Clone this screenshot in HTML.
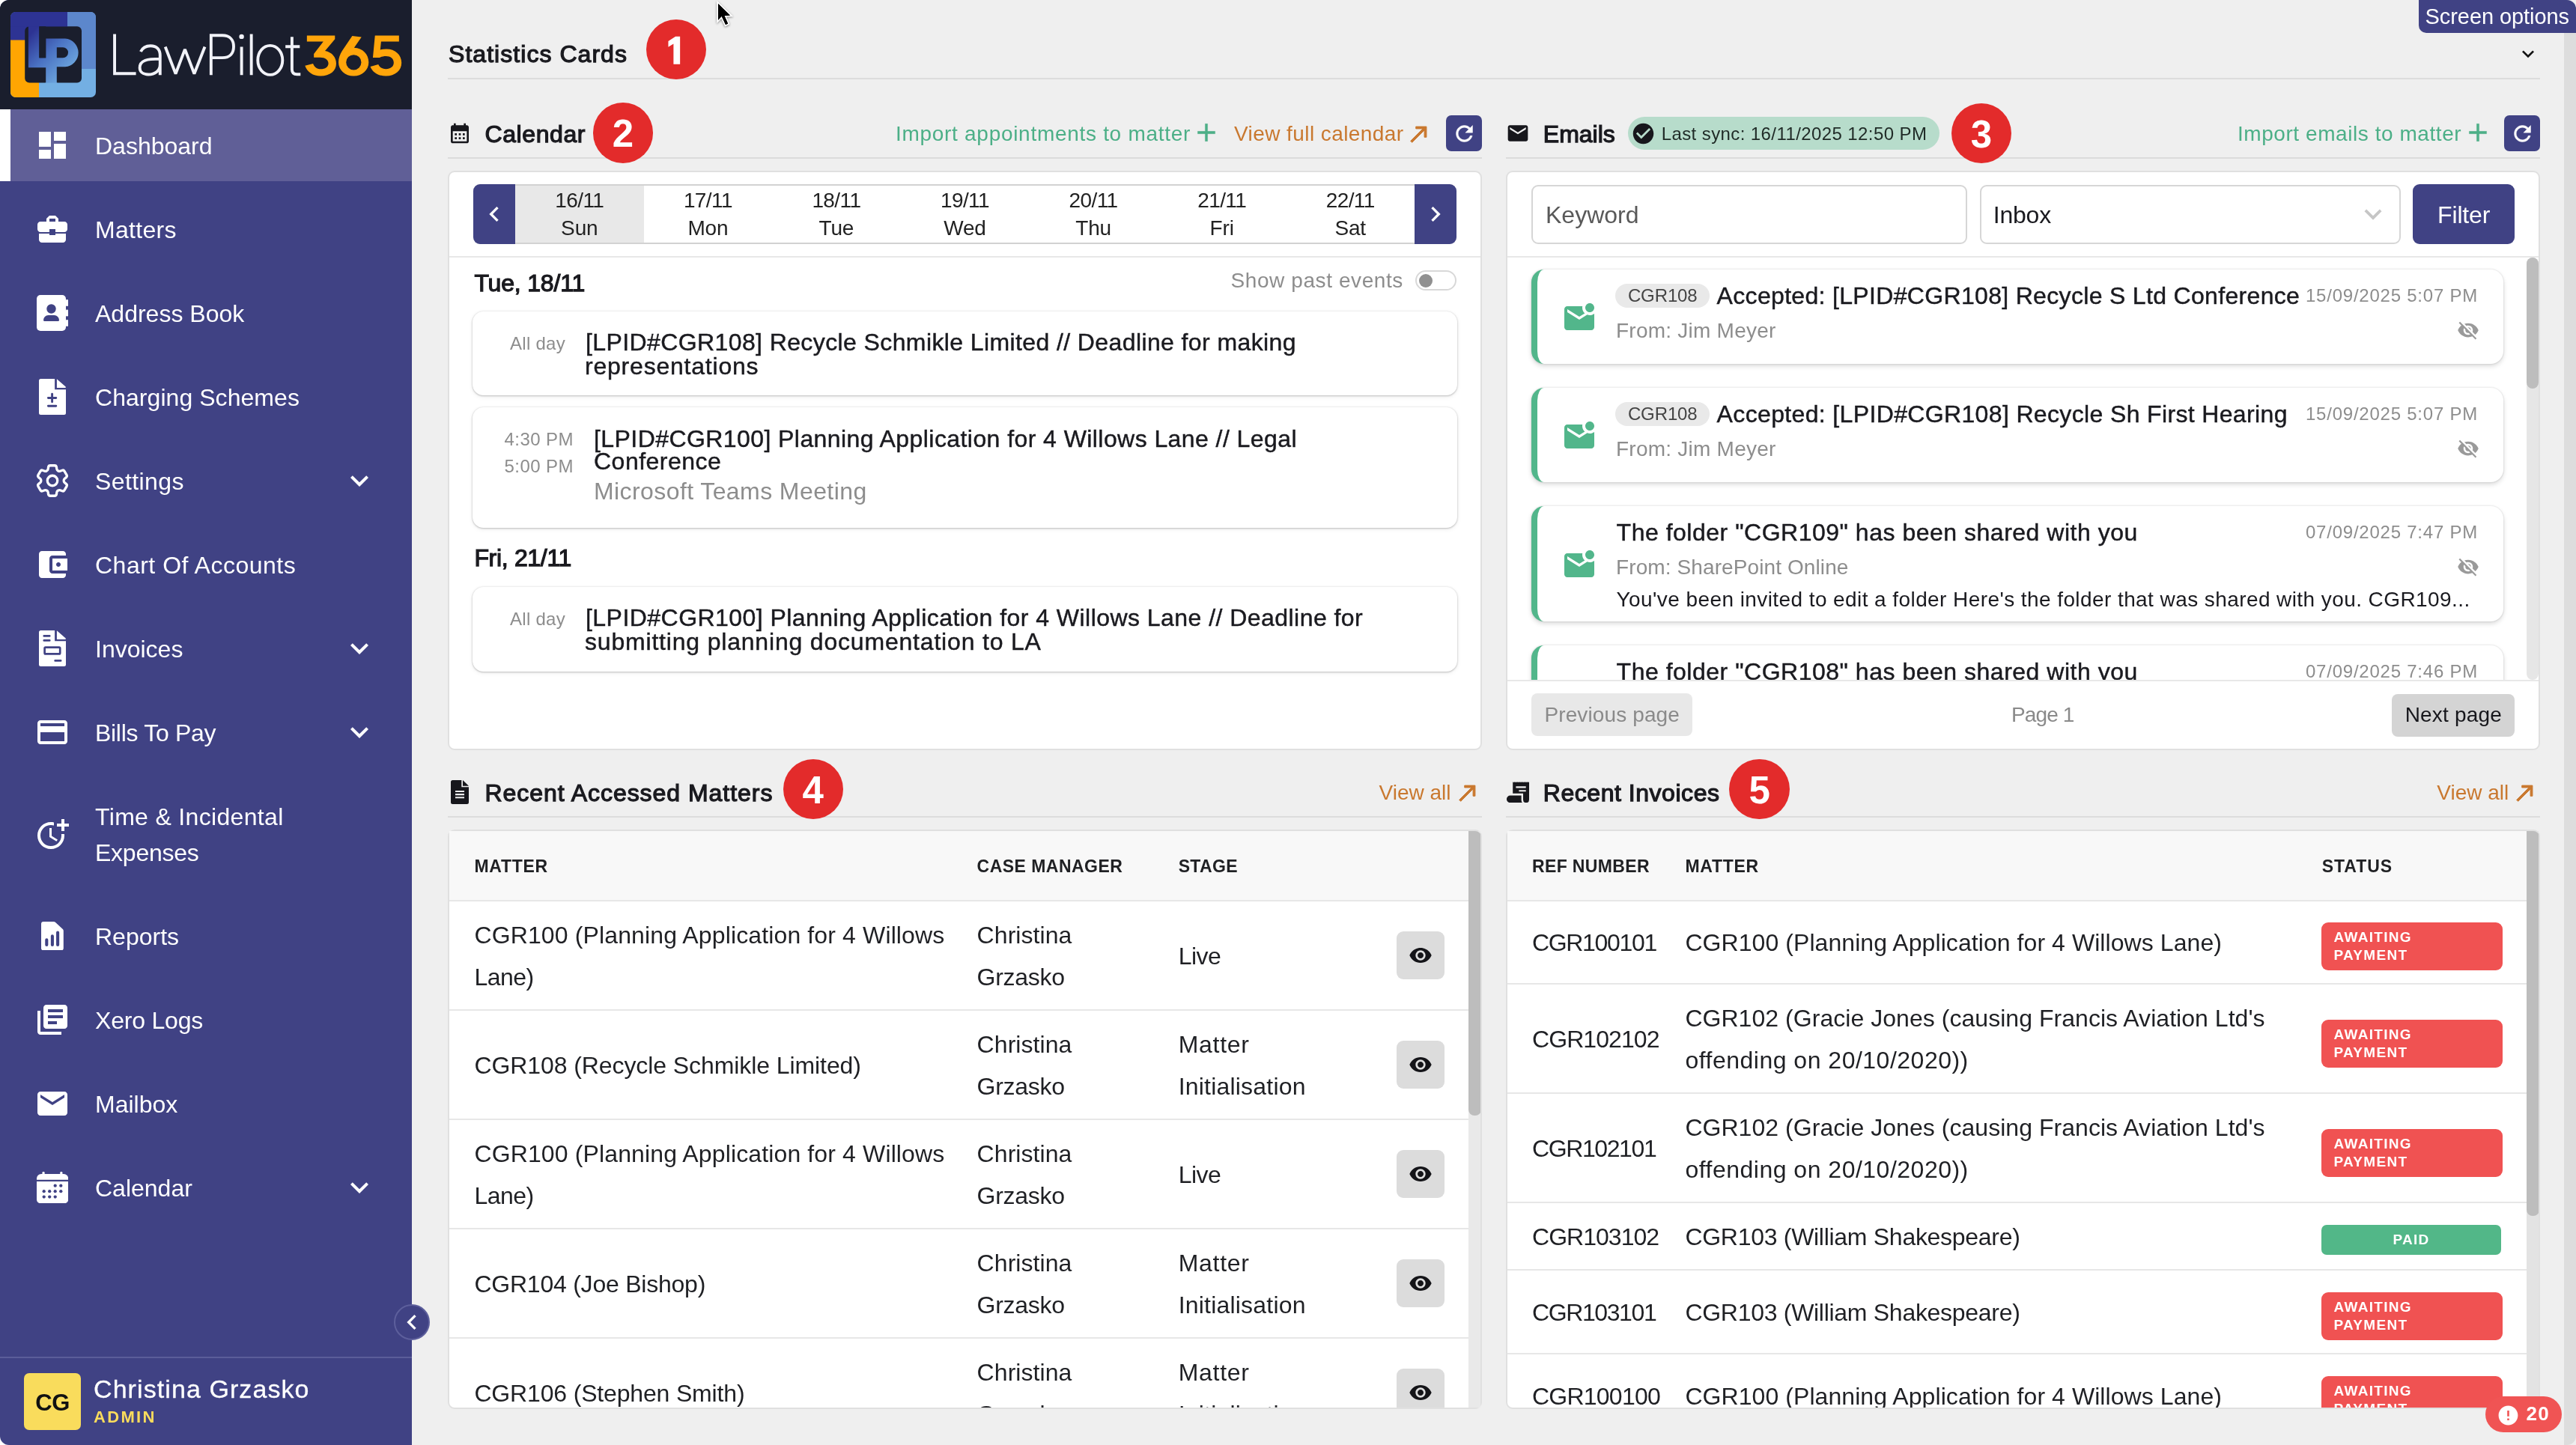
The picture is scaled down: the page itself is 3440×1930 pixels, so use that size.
<!DOCTYPE html><html><head><meta charset="utf-8"><title>LawPilot365</title><style>
html,body{margin:0;padding:0}
body{width:3440px;height:1930px;overflow:hidden;background:#efefef;font-family:"Liberation Sans",sans-serif;font-size:32px;color:#17171c;position:relative}
*{box-sizing:border-box}
#root{position:absolute;left:0;top:0;width:3440px;height:1930px;overflow:hidden;will-change:transform;transform:translateZ(0)}
.abs{position:absolute}
svg.mi{display:block}
#sb{position:absolute;left:0;top:0;width:550px;height:1930px;background:#404284;border-radius:12px 0 0 12px;overflow:hidden}
#lh{position:absolute;left:0;top:0;width:550px;height:146px;background:#1a1e2d}
.nav{position:absolute;left:0;width:550px;color:#fff}
.nav.act{background:#605f97;border-left:14px solid #fff}
.nav .ni{position:absolute;left:46px;top:50%;width:48px;height:48px;margin-top:-24px;display:flex;align-items:center;justify-content:center;overflow:visible}
.nav.act .ni{left:32px}
.nav .nl{position:absolute;left:127px;top:50%;margin-top:1px;transform:translateY(-50%);font-size:32px;line-height:48px;white-space:nowrap;letter-spacing:-0.050px}
.nav.act .nl{left:113px}
.nav .chev{position:absolute;left:456px;top:50%;margin-top:-24px}
.h2{position:absolute;font-weight:bold;font-size:32px;line-height:40px;white-space:nowrap;color:#17171c}
.hr{position:absolute;height:2px;background:#dcdcdc}
.card{position:absolute;background:#fff;border:2px solid #e0e0e0;border-radius:9px;overflow:hidden}
.num{position:absolute;z-index:5;width:80.500px;height:80.500px;border-radius:50%;background:#e32b2b;color:#fff;font-size:51px;font-weight:bold;line-height:83px;text-align:center}
.lnk{position:absolute;font-size:28px;line-height:40px;white-space:nowrap;display:flex;align-items:center}
.green{color:#4caf87}.orange{color:#c9782f}
.rbtn{position:absolute;width:48px;height:48px;border-radius:7px;background:#404284;display:flex;align-items:center;justify-content:center}
</style></head><body><div id="root">
<div class="abs" style="left:0;top:0;width:20px;height:20px;background:#fff"></div><div class="abs" style="left:0;top:1910px;width:20px;height:20px;background:#fff"></div>
<div id="sb"><div id="lh"><svg style="position:absolute;left:14px;top:16px" width="114" height="114" viewBox="0 0 114 114">
<defs><clipPath id="lc"><rect x="0" y="0" width="114" height="114" rx="7"/></clipPath>
<linearGradient id="lg" x1="0.200" y1="0" x2="0.800" y2="1"><stop offset="0.120" stop-color="#2d3393"/><stop offset="0.450" stop-color="#4a72c3"/><stop offset="0.820" stop-color="#70abe0"/><stop offset="1" stop-color="#73afe3"/></linearGradient></defs>
<g clip-path="url(#lc)">
<rect x="0" y="0" width="114" height="114" fill="#73afe3"/>
<rect x="0" y="0" width="76" height="38" fill="#2d3393"/>
<rect x="76" y="0" width="38" height="76" fill="#5c87cc"/>
<rect x="0" y="37.500" width="38" height="77" fill="#ffa502"/>
<rect x="19.200" y="19.300" width="75.800" height="75.300" rx="6" fill="#1a1e2d"/>
<path fill="url(#lg)" d="M23.900 0H38.400V61.300H47.200V35.400H73a19 19 0 0 1 0 37.900H61.800V114H47.200V74.300H23.900zM61.800 47.300V61.300H70a7 7 0 0 0 0-14z"/>
<rect x="0" y="0" width="76" height="19.300" fill="#2d3393"/>
<rect x="38.400" y="19.300" width="8.800" height="42" fill="#1a1e2d"/>
<rect x="46.500" y="94.600" width="16" height="20" fill="#73afe3"/>
</g></svg><svg style="position:absolute;left:0;top:0" width="550" height="146" viewBox="0 0 550 146">
<g fill="none" stroke="#f1f2f8" stroke-width="3.900" stroke-linejoin="miter" stroke-miterlimit="2">
<path d="M153.04,45.49 L153.04,98.31 L181.57,98.31 M187.93,68.97 C190.54,63.42 195.43,61.22 200.98,61.22 C209.29,61.22 213.78,65.87 213.78,74.02 L213.78,100.27 M213.78,78.67 C205.22,78.67 198.69,78.91 193.80,80.71 C188.91,82.58 186.63,86.25 186.63,90.49 C186.63,96.03 191.36,99.45 198.04,99.45 C206.85,99.45 213.78,94.40 213.78,86.25 M220.70,62.44 L234.56,98.48 L246.95,65.87 L259.43,98.48 L273.53,62.44 M281.84,100.27 L281.84,47.28 L296.93,47.28 C307.12,47.28 312.01,53.64 312.01,62.20 C312.01,70.76 307.12,77.12 296.93,77.12 L281.84,77.12 M322.60,62.44 L322.60,100.27 M335.65,45.49 L335.65,100.27"/><ellipse cx="360.79" cy="80.38" rx="16.500" ry="19.500"/><path d="M389.89,49.16 L389.89,92.77 C389.89,97.66 392.58,99.29 396.66,99.29 L401.30,99.29 M381.17,62.20 L400.32,62.20"/></g>
<circle cx="322.60" cy="48.91" r="3.200" fill="#f1f2f8"/>
<g fill="#ffa50a" transform="translate(400,36) scale(0.056287)">
<path d="M175,205 H840 V290 L605,570 C770,600 870,720 870,870 C870,1040 720,1165 500,1165 C320,1165 180,1070 130,920 L320,870 C350,950 410,1000 500,1000 C610,1000 685,945 685,865 C685,780 610,722 490,722 H340 V640 L565,345 H175 Z"/>
<path fill-rule="evenodd" d="M1250,215 L1470,240 L1295,492 C1500,500 1640,650 1640,840 C1640,1025 1485,1165 1283,1165 C1080,1165 925,1025 925,840 C925,740 960,650 1010,570 Z M1285,660 A180,180 0 1 0 1285,1020 A180,180 0 1 0 1285,660 Z"/>
<path d="M1790,205 H2360 V345 H1935 L1915,540 C1960,530 2010,525 2060,525 C2270,525 2420,660 2420,850 C2420,1035 2270,1165 2050,1165 C1870,1165 1730,1075 1680,940 L1870,888 C1900,960 1965,1000 2050,1000 C2160,1000 2235,940 2235,850 C2235,755 2160,695 2050,695 C1990,695 1940,708 1900,730 L1740,730 Z"/>
</g></svg></div>
<div class="nav act" style="top:146px;height:96px"><div class="ni"><svg class="mi" width="48" height="48" viewBox="0 0 24 24" style=""><path fill="#fff" d="M3 13h8V3H3v10zm0 8h8v-6H3v6zm10 0h8V11h-8v10zm0-18v6h8V3h-8z"/></svg></div><div class="nl"><span style="letter-spacing:0px">Dashboard</span></div></div>
<div class="nav" style="top:258px;height:96px"><div class="ni"><svg class="mi" width="48" height="48" viewBox="0 0 24 24" style=""><path fill="#fff" d="M10 16v-1H3.01L3 19c0 1.11.89 2 2 2h14c1.11 0 2-.89 2-2v-4h-7v1h-4zm10-9h-4.01V5l-2-2h-4l-2 2v2H4c-1.1 0-2 .9-2 2v3c0 1.11.89 2 2 2h6v-2h4v2h6c1.1 0 2-.9 2-2V9c0-1.1-.9-2-2-2zm-6 0h-4V5h4v2z"/></svg></div><div class="nl"><span style="letter-spacing:0.3px">Matters</span></div></div>
<div class="nav" style="top:370px;height:96px"><div class="ni"><svg class="mi" width="42" height="48" viewBox="0 0 42 48"><path fill="#fff" d="M5 0h29a5 5 0 0 1 5 5v38a5 5 0 0 1-5 5H5a5 5 0 0 1-5-5V5a5 5 0 0 1 5-5z"/><rect x="39" y="6" width="3" height="9" rx="1.2" fill="#fff"/><rect x="39" y="19.500" width="3" height="9" rx="1.2" fill="#fff"/><rect x="39" y="33" width="3" height="9" rx="1.2" fill="#fff"/><circle cx="19.500" cy="18.500" r="6.200" fill="#404284"/><path fill="#404284" d="M9 33.500a6.500 6.500 0 0 1 6.500-6.500h8a6.500 6.500 0 0 1 6.500 6.500v0a1.500 1.500 0 0 1-1.500 1.500h-18a1.500 1.500 0 0 1-1.500-1.500z"/></svg></div><div class="nl"><span style="letter-spacing:0px">Address Book</span></div></div>
<div class="nav" style="top:482px;height:96px"><div class="ni"><svg class="mi" width="36" height="48" viewBox="0 0 36 48"><path fill="#fff" d="M2.500 0H21.100V14.300H36V45.500a2.500 2.500 0 0 1-2.500 2.500H2.500a2.500 2.500 0 0 1-2.500-2.500V2.500a2.500 2.500 0 0 1 2.500-2.500zM23.900 0.300L35.700 10.600V11.900H23.900z"/><path d="M17.600 20.300v10.400M12.400 25.500h10.400M12.400 36.300h10.400" stroke="#404284" stroke-width="2.900" stroke-linecap="round" fill="none"/></svg></div><div class="nl"><span style="letter-spacing:0.05px">Charging Schemes</span></div></div>
<div class="nav" style="top:594px;height:96px"><div class="ni"><svg class="mi" width="54" height="54" viewBox="0 0 24 24" style="flex:none"><path fill="none" stroke="#fff" stroke-width="1.450" stroke-linejoin="round" stroke-linecap="round" d="M9.594 3.94c.09-.542.56-.94 1.11-.94h2.593c.55 0 1.02.398 1.11.94l.213 1.281c.063.374.313.686.645.87.074.04.147.083.22.127.325.196.72.257 1.075.124l1.217-.456a1.125 1.125 0 0 1 1.37.49l1.296 2.247a1.125 1.125 0 0 1-.26 1.431l-1.003.827c-.293.241-.438.613-.43.992a7.723 7.723 0 0 1 0 .255c-.008.378.137.75.43.991l1.004.827c.424.35.534.955.26 1.43l-1.298 2.247a1.125 1.125 0 0 1-1.369.491l-1.217-.456c-.355-.133-.75-.072-1.076.124a6.470 6.470 0 0 1-.22.128c-.331.183-.581.495-.644.869l-.213 1.281c-.09.543-.56.940-1.110.940h-2.594c-.55 0-1.019-.398-1.110-.940l-.213-1.281c-.062-.374-.312-.686-.644-.870a6.520 6.520 0 0 1-.22-.127c-.325-.196-.72-.257-1.076-.124l-1.217.456a1.125 1.125 0 0 1-1.369-.490l-1.297-2.247a1.125 1.125 0 0 1 .26-1.431l1.004-.827c.292-.24.437-.613.43-.991a6.932 6.932 0 0 1 0-.255c.007-.38-.138-.751-.43-.992l-1.004-.827a1.125 1.125 0 0 1-.26-1.430l1.297-2.247a1.125 1.125 0 0 1 1.370-.491l1.216.456c.356.133.751.072 1.076-.124.072-.044.146-.086.220-.128.332-.183.582-.495.644-.869l.214-1.280Z M15 12a3 3 0 1 1-6 0 3 3 0 0 1 6 0Z"/></svg></div><div class="nl"><span style="letter-spacing:0.4px">Settings</span></div><div class="chev"><svg class="mi" width="48" height="48" viewBox="0 0 24 24" style=""><path fill="#fff" d="M16.59 8.59L12 13.17 7.41 8.59 6 10l6 6 6-6z"/></svg></div></div>
<div class="nav" style="top:706px;height:96px"><div class="ni"><svg class="mi" width="48" height="48" viewBox="0 0 24 24" style=""><path fill="#fff" d="M21 18v1c0 1.1-.9 2-2 2H5c-1.11 0-2-.9-2-2V5c0-1.1.89-2 2-2h14c1.1 0 2 .9 2 2v1h-9c-1.11 0-2 .9-2 2v8c0 1.1.89 2 2 2h9zm-9-2h10V8H12v8zm4-2.5c-.83 0-1.5-.67-1.5-1.5s.67-1.5 1.5-1.5 1.5.67 1.5 1.5-.67 1.5-1.5 1.5z"/></svg></div><div class="nl"><span style="letter-spacing:0.5px">Chart Of Accounts</span></div></div>
<div class="nav" style="top:818px;height:96px"><div class="ni"><svg class="mi" width="36" height="48" viewBox="0 0 36 48"><path fill="#fff" d="M2.500 0H21.100V14.300H36V45.500a2.500 2.500 0 0 1-2.500 2.500H2.500a2.500 2.500 0 0 1-2.500-2.500V2.500a2.500 2.500 0 0 1 2.500-2.500zM23.900 0.300L35.700 10.600V11.900H23.900z"/><path d="M6.800 7.400h7.400M6.800 13.400h7.400M21.700 40.400h7.400" stroke="#404284" stroke-width="2.800" stroke-linecap="round" fill="none"/><rect x="7.600" y="22.600" width="20.600" height="8.800" rx="1.200" fill="none" stroke="#404284" stroke-width="2.700"/></svg></div><div class="nl"><span style="letter-spacing:0px">Invoices</span></div><div class="chev"><svg class="mi" width="48" height="48" viewBox="0 0 24 24" style=""><path fill="#fff" d="M16.59 8.59L12 13.17 7.41 8.59 6 10l6 6 6-6z"/></svg></div></div>
<div class="nav" style="top:930px;height:96px"><div class="ni"><svg class="mi" width="48" height="48" viewBox="0 0 24 24" style=""><path fill="#fff" d="M20 4H4c-1.11 0-1.99.89-1.99 2L2 18c0 1.11.89 2 2 2h16c1.11 0 2-.89 2-2V6c0-1.11-.89-2-2-2zm0 14H4v-6h16v6zm0-10H4V6h16v2z"/></svg></div><div class="nl"><span style="letter-spacing:-0.3px">Bills To Pay</span></div><div class="chev"><svg class="mi" width="48" height="48" viewBox="0 0 24 24" style=""><path fill="#fff" d="M16.59 8.59L12 13.17 7.41 8.59 6 10l6 6 6-6z"/></svg></div></div>
<div class="nav" style="top:1042px;height:144px"><div class="ni"><svg class="mi" width="48" height="48" viewBox="0 0 24 24" style=""><path fill="#fff" d="M10 8v6l4.7 2.9.8-1.2-4-2.4V8z M17.92 12c.05.33.08.66.08 1 0 3.9-3.1 7-7 7s-7-3.1-7-7 3.1-7 7-7c.7 0 1.37.1 2 .29V4.23c-.64-.15-1.31-.23-2-.23-5 0-9 4-9 9s4 9 9 9 9-4 9-9c0-.34-.02-.67-.06-1h-2.02z M20 5V2h-2v3h-3v2h3v3h2V7h3V5z"/></svg></div><div class="nl"><span style="letter-spacing:0.33px">Time &amp; Incidental</span><br><span style="letter-spacing:-0.25px">Expenses</span></div></div>
<div class="nav" style="top:1202px;height:96px"><div class="ni"><svg class="mi" width="29.800" height="38.400" viewBox="0 0 29.800 38.400"><path fill="#fff" stroke="#fff" stroke-width="6" stroke-linejoin="round" d="M3 3H16.800L26.800 12.300V35.400H3z"/><path d="M7.300 31v-6.800M14.900 31V19.400M22.100 31V14.600" stroke="#404284" stroke-width="4.100" stroke-linecap="round" fill="none"/></svg></div><div class="nl"><span style="letter-spacing:0px">Reports</span></div></div>
<div class="nav" style="top:1314px;height:96px"><div class="ni"><svg class="mi" width="48" height="48" viewBox="0 0 24 24" style=""><path fill="#fff" d="M4 6H2v14c0 1.1.9 2 2 2h14v-2H4V6zm16-4H8c-1.1 0-2 .9-2 2v12c0 1.1.9 2 2 2h12c1.1 0 2-.9 2-2V4c0-1.1-.9-2-2-2zm-1 9H9V9h10v2zm-4 4H9v-2h6v2zm4-8H9V5h10v2z"/></svg></div><div class="nl"><span style="letter-spacing:-0.2px">Xero Logs</span></div></div>
<div class="nav" style="top:1426px;height:96px"><div class="ni"><svg class="mi" width="48" height="48" viewBox="0 0 24 24" style=""><path fill="#fff" d="M20 4H4c-1.1 0-1.99.9-1.99 2L2 18c0 1.1.9 2 2 2h16c1.1 0 2-.9 2-2V6c0-1.1-.9-2-2-2zm0 4l-8 5-8-5V6l8 5 8-5v2z"/></svg></div><div class="nl"><span style="letter-spacing:0px">Mailbox</span></div></div>
<div class="nav" style="top:1538px;height:96px"><div class="ni"><svg class="mi" width="42.200" height="42.200" viewBox="0 0 42.200 42.200"><path fill="#fff" d="M0 10.700V9a6 6 0 0 1 6-5.900H36.200a6 6 0 0 1 6 5.900V10.700zM0 13.100H42.200V37.200a5 5 0 0 1-5 5H5a5 5 0 0 1-5-5z"/><rect x="7.500" y="0" width="3.100" height="5" rx="1.200" fill="#fff"/><rect x="31.300" y="0" width="3.100" height="5" rx="1.200" fill="#fff"/><circle cx="24.7" cy="18.7" r="2.150" fill="#404284"/><circle cx="32.3" cy="18.7" r="2.150" fill="#404284"/><circle cx="9.7" cy="26.2" r="2.150" fill="#404284"/><circle cx="17.2" cy="26.2" r="2.150" fill="#404284"/><circle cx="24.7" cy="26.2" r="2.150" fill="#404284"/><circle cx="32.3" cy="26.2" r="2.150" fill="#404284"/><circle cx="9.7" cy="33.6" r="2.150" fill="#404284"/><circle cx="17.2" cy="33.6" r="2.150" fill="#404284"/><circle cx="24.7" cy="33.6" r="2.150" fill="#404284"/></svg></div><div class="nl"><span style="letter-spacing:0px">Calendar</span></div><div class="chev"><svg class="mi" width="48" height="48" viewBox="0 0 24 24" style=""><path fill="#fff" d="M16.59 8.59L12 13.17 7.41 8.59 6 10l6 6 6-6z"/></svg></div></div>
<div class="abs" style="left:0;top:1812px;width:550px;height:2px;background:#5b5d99"></div>
<div class="abs" style="left:32px;top:1834px;width:76px;height:76px;border-radius:7px;background:#f9dc5c;color:#111;font-weight:bold;font-size:31px;line-height:80px;text-align:center;letter-spacing:-0.500px">CG</div>
<div class="abs" style="left:125px;top:1833px;color:#fff;font-size:34px;line-height:44px;white-space:nowrap;letter-spacing:1.080px;-webkit-text-stroke:0.300px #fff">Christina Grzasko</div>
<div class="abs" style="left:125px;top:1877.700px;color:#fbdc5c;font-weight:bold;font-size:22px;line-height:30px;letter-spacing:2.300px">ADMIN</div>
</div>
<div class="abs" style="left:526px;top:1742px;width:48px;height:48px;border-radius:50%;background:#404284;border:2px solid #5d5f9c;display:flex;align-items:center;justify-content:center"><svg class="mi" width="40" height="40" viewBox="0 0 24 24" style=""><path fill="#fff" d="M15.41 7.41L14 6l-6 6 6 6 1.41-1.41L10.83 12z"/></svg></div>
<style>
.ev{background:#fff;border:0;border-radius:14.500px;box-shadow:0 0 2.500px rgba(0,0,0,.10),0 1px 2.500px rgba(0,0,0,.20),0 2px 7px rgba(0,0,0,.06)}
.em{background:#fff;border:0;border-left:8px solid #52b68b;border-radius:17px;box-shadow:0 0 0 1.500px rgba(0,0,0,.045),0 3px 6px rgba(0,0,0,.15)}
</style>
<div class="abs" style="left:3230px;top:0;width:210px;height:44px;background:#404284;border-radius:0 12px 0 10px"></div>
<div class="abs" style="left:3238.6px;top:4.15px;font-size:29px;font-weight:normal;color:#fff;letter-spacing:-0.076px;line-height:36px;white-space:nowrap;">Screen options</div>
<div class="abs" style="left:3424px;top:44px;width:16px;height:1886px;background:#dddddd;border-radius:0 0 12px 0"></div>
<div class="abs" style="left:599px;top:52.41px;font-size:32px;font-weight:normal;color:#1a1a1f;letter-spacing:1.045px;line-height:40px;white-space:nowrap;-webkit-text-stroke:1.250px #1a1a1f;">Statistics Cards</div>
<div class="num" style="left:862.75px;top:25.549999999999997px"><svg width="80.500" height="80.500" viewBox="-40.250 -40.250 80.500 80.500" style="display:block"><path fill="#fff" d="M4.900,-17.600 V19.500 H-3.850 V-7.850 L-10.800,-3.500 V-11.300 L-1.200,-17.600 Z"/></svg></div>
<div class="abs" style="left:3359.500px;top:55.500px"><svg class="mi" width="32" height="32" viewBox="0 0 24 24" style=""><path fill="#111" d="M16.59 8.59L12 13.17 7.41 8.59 6 10l6 6 6-6z"/></svg></div>
<div class="hr" style="left:598px;top:104px;width:2794px"></div>
<svg class="abs" style="left:940px;top:0;z-index:9;filter:drop-shadow(0 1px 1.500px rgba(0,0,0,.45))" width="60" height="45" viewBox="0 0 60 45"><path d="M19,5 L19,26.800 L23.700,21.800 L29,33 L32.100,31.400 L27.400,20.900 L34.900,20.500 Z" fill="#000" stroke="#fff" stroke-width="3.600" stroke-linejoin="miter" paint-order="stroke"/><path d="M19,5 L19,26.800 L23.700,21.800 L29,33 L32.100,31.400 L27.400,20.900 L34.900,20.500 Z" fill="#000"/></svg>
<div class="abs" style="left:597.700px;top:162px"><svg class="mi" width="32" height="32" viewBox="0 0 24 24" style=""><path fill="#17171c" d="M19 4h-1V2h-2v2H8V2H6v2H5c-1.11 0-1.99.9-1.99 2L3 20c0 1.1.89 2 2 2h14c1.1 0 2-.9 2-2V6c0-1.1-.9-2-2-2zm0 16H5V10h14v10zM9 14H7v-2h2v2zm4 0h-2v-2h2v2zm4 0h-2v-2h2v2zm-8 4H7v-2h2v2zm4 0h-2v-2h2v2zm4 0h-2v-2h2v2z"/></svg></div>
<div class="abs" style="left:647.5px;top:158.51px;font-size:32px;font-weight:normal;color:#1a1a1f;letter-spacing:0.580px;line-height:40px;white-space:nowrap;-webkit-text-stroke:1.250px #1a1a1f;">Calendar</div>
<div class="num" style="left:791.75px;top:137.35px">2</div>
<div class="abs" style="left:1196px;top:161.2px;font-size:28px;font-weight:normal;color:#4caf87;letter-spacing:0.706px;line-height:35px;white-space:nowrap;">Import appointments to matter</div>
<div class="abs" style="left:1590.700px;top:157.400px"><svg class="mi" width="40" height="40" viewBox="0 0 24 24" style=""><path fill="#4caf87" stroke="#4caf87" stroke-width="0.15" stroke-linejoin="miter" d="M19 13h-6v6h-2v-6H5v-2h6V5h2v6h6v2z"/></svg></div>
<div class="abs" style="left:1648px;top:161.2px;font-size:28px;font-weight:normal;color:#c9782f;letter-spacing:0.419px;line-height:35px;white-space:nowrap;">View full calendar</div>
<div class="abs" style="left:1878.300px;top:162px"><svg class="mi" width="34" height="34" viewBox="0 0 24 24" style=""><path fill="#c9782f" stroke="#c9782f" stroke-width="0.7" stroke-linejoin="miter" d="M9 5v2h6.59L4 18.59 5.41 20 17 8.41V15h2V5z"/></svg></div>
<div class="rbtn" style="left:1931px;top:154px"><svg class="mi" width="33" height="33" viewBox="0 0 24 24" style=""><path fill="#fff" stroke="#fff" stroke-width="0.3" stroke-linejoin="miter" d="M17.65 6.35C16.2 4.9 14.21 4 12 4c-4.42 0-7.99 3.58-7.99 8s3.57 8 7.99 8c3.73 0 6.84-2.55 7.73-6h-2.08c-.82 2.33-3.04 4-5.65 4-3.31 0-6-2.69-6-6s2.69-6 6-6c1.66 0 3.14.69 4.22 1.78L13 11h7V4l-2.35 2.35z"/></svg></div>
<div class="hr" style="left:598px;top:210px;width:1381px"></div>
<div class="card" style="left:598px;top:228px;width:1381px;height:774px"></div>
<div class="abs" style="left:632px;top:246px;width:1313px;height:80px;border-top:2px solid #d2d2d2;border-bottom:2px solid #d2d2d2;border-radius:9px;background:#fff"></div>
<div class="abs" style="left:688px;top:248px;width:171.600px;height:76px;background:#e8e8e8"></div>
<div class="abs" style="left:632px;top:246px;width:56px;height:80px;background:#404284;border-radius:9px 0 0 9px;display:flex;align-items:center;justify-content:center"><svg class="mi" width="40" height="40" viewBox="0 0 24 24" style=""><path fill="#fff" d="M15.41 7.41L14 6l-6 6 6 6 1.41-1.41L10.83 12z"/></svg></div>
<div class="abs" style="left:1889px;top:246px;width:56px;height:80px;background:#404284;border-radius:0 9px 9px 0;display:flex;align-items:center;justify-content:center"><svg class="mi" width="40" height="40" viewBox="0 0 24 24" style=""><path fill="#fff" d="M10 6L8.59 7.41 13.17 12l-4.58 4.59L10 18l6-6z"/></svg></div>
<div class="abs" style="left:688.0px;top:248.80px;width:171.6px;text-align:center;font-size:28px;line-height:37px;color:#222;letter-spacing:-0.150px"><span style="letter-spacing:-0.600px">16/11</span><br>Sun</div>
<div class="abs" style="left:859.6px;top:248.80px;width:171.6px;text-align:center;font-size:28px;line-height:37px;color:#222;letter-spacing:-0.150px"><span style="letter-spacing:-0.600px">17/11</span><br>Mon</div>
<div class="abs" style="left:1031.1px;top:248.80px;width:171.6px;text-align:center;font-size:28px;line-height:37px;color:#222;letter-spacing:-0.150px"><span style="letter-spacing:-0.600px">18/11</span><br>Tue</div>
<div class="abs" style="left:1202.7px;top:248.80px;width:171.6px;text-align:center;font-size:28px;line-height:37px;color:#222;letter-spacing:-0.150px"><span style="letter-spacing:-0.600px">19/11</span><br>Wed</div>
<div class="abs" style="left:1374.3px;top:248.80px;width:171.6px;text-align:center;font-size:28px;line-height:37px;color:#222;letter-spacing:-0.150px"><span style="letter-spacing:-0.600px">20/11</span><br>Thu</div>
<div class="abs" style="left:1545.9px;top:248.80px;width:171.6px;text-align:center;font-size:28px;line-height:37px;color:#222;letter-spacing:-0.150px"><span style="letter-spacing:-0.600px">21/11</span><br>Fri</div>
<div class="abs" style="left:1717.4px;top:248.80px;width:171.6px;text-align:center;font-size:28px;line-height:37px;color:#222;letter-spacing:-0.150px"><span style="letter-spacing:-0.600px">22/11</span><br>Sat</div>
<div class="abs" style="left:600px;top:342px;width:1377px;height:2px;background:#e8e8e8"></div>
<div class="abs" style="left:633.4px;top:357.71px;font-size:32px;font-weight:normal;color:#1a1a1f;letter-spacing:-0.184px;line-height:40px;white-space:nowrap;-webkit-text-stroke:1.250px #1a1a1f;">Tue, 18/11</div>
<div class="abs" style="left:1643.5px;top:357.2px;font-size:28px;font-weight:normal;color:#8d8d8d;letter-spacing:0.586px;line-height:35px;white-space:nowrap;">Show past events</div>
<div class="abs" style="left:1889.500px;top:361px;width:55px;height:27px;border:2px solid #d8d8d8;border-radius:14px;background:#fff"></div>
<div class="abs" style="left:1894.600px;top:366.400px;width:18px;height:18px;border-radius:50%;background:#909090"></div>
<div class="abs ev" style="left:631px;top:415.5px;width:1315px;height:112.8px"></div>
<div class="abs" style="left:681px;top:443.68px;font-size:24px;font-weight:normal;color:#8d8d8d;letter-spacing:0.279px;line-height:30px;white-space:nowrap;">All day</div>
<div class="abs" style="left:782px;top:436.91px;font-size:32px;font-weight:normal;color:#1a1a1f;letter-spacing:0.395px;line-height:40px;white-space:nowrap;-webkit-text-stroke:0.450px #1a1a1f;">[LPID#CGR108] Recycle Schmikle Limited // Deadline for making</div>
<div class="abs" style="left:781px;top:468.51px;font-size:32px;font-weight:normal;color:#1a1a1f;letter-spacing:0.788px;line-height:40px;white-space:nowrap;-webkit-text-stroke:0.450px #1a1a1f;">representations</div>
<div class="abs ev" style="left:631px;top:543.5px;width:1315px;height:161px"></div>
<div class="abs" style="left:673.5px;top:572.08px;font-size:24px;font-weight:normal;color:#8d8d8d;letter-spacing:0.444px;line-height:30px;white-space:nowrap;">4:30 PM</div>
<div class="abs" style="left:673.5px;top:607.68px;font-size:24px;font-weight:normal;color:#8d8d8d;letter-spacing:0.444px;line-height:30px;white-space:nowrap;">5:00 PM</div>
<div class="abs" style="left:793px;top:565.91px;font-size:32px;font-weight:normal;color:#1a1a1f;letter-spacing:0.427px;line-height:40px;white-space:nowrap;-webkit-text-stroke:0.450px #1a1a1f;">[LPID#CGR100] Planning Application for 4 Willows Lane // Legal</div>
<div class="abs" style="left:793px;top:595.91px;font-size:32px;font-weight:normal;color:#1a1a1f;letter-spacing:0.486px;line-height:40px;white-space:nowrap;-webkit-text-stroke:0.450px #1a1a1f;">Conference</div>
<div class="abs" style="left:793px;top:635.91px;font-size:32px;font-weight:normal;color:#8d8d8d;letter-spacing:0.413px;line-height:40px;white-space:nowrap;">Microsoft Teams Meeting</div>
<div class="abs" style="left:633.4px;top:724.91px;font-size:32px;font-weight:normal;color:#1a1a1f;letter-spacing:-0.320px;line-height:40px;white-space:nowrap;-webkit-text-stroke:1.250px #1a1a1f;">Fri, 21/11</div>
<div class="abs ev" style="left:631px;top:784px;width:1315px;height:112.5px"></div>
<div class="abs" style="left:681px;top:812.18px;font-size:24px;font-weight:normal;color:#8d8d8d;letter-spacing:0.279px;line-height:30px;white-space:nowrap;">All day</div>
<div class="abs" style="left:782px;top:805.41px;font-size:32px;font-weight:normal;color:#1a1a1f;letter-spacing:0.456px;line-height:40px;white-space:nowrap;-webkit-text-stroke:0.450px #1a1a1f;">[LPID#CGR100] Planning Application for 4 Willows Lane // Deadline for</div>
<div class="abs" style="left:781px;top:836.91px;font-size:32px;font-weight:normal;color:#1a1a1f;letter-spacing:0.809px;line-height:40px;white-space:nowrap;-webkit-text-stroke:0.450px #1a1a1f;">submitting planning documentation to LA</div>
<div class="abs" style="left:2010.700px;top:162.400px"><svg class="mi" width="32" height="32" viewBox="0 0 24 24" style=""><path fill="#17171c" d="M20 4H4c-1.1 0-1.99.9-1.99 2L2 18c0 1.1.9 2 2 2h16c1.1 0 2-.9 2-2V6c0-1.1-.9-2-2-2zm0 4l-8 5-8-5V6l8 5 8-5v2z"/></svg></div>
<div class="abs" style="left:2060.8px;top:158.51px;font-size:32px;font-weight:normal;color:#1a1a1f;letter-spacing:-0.003px;line-height:40px;white-space:nowrap;-webkit-text-stroke:1.250px #1a1a1f;">Emails</div>
<div class="abs" style="left:2173.600px;top:155.700px;width:416.400px;height:44.300px;border-radius:22px;background:#b7dccb"></div>
<div class="abs" style="left:2177.500px;top:161.500px"><svg class="mi" width="33" height="33" viewBox="0 0 24 24" style=""><path fill="#17171c" d="M12 2C6.48 2 2 6.48 2 12s4.48 10 10 10 10-4.48 10-10S17.52 2 12 2zm-2 15l-5-5 1.41-1.41L10 14.17l7.59-7.59L19 8l-9 9z"/></svg></div>
<div class="abs" style="left:2218.7px;top:163.68px;font-size:24px;font-weight:normal;color:#1f2a26;letter-spacing:0.405px;line-height:30px;white-space:nowrap;">Last sync: 16/11/2025 12:50 PM</div>
<div class="num" style="left:2605.75px;top:137.55px">3</div>
<div class="abs" style="left:2988px;top:161.2px;font-size:28px;font-weight:normal;color:#4caf87;letter-spacing:0.560px;line-height:35px;white-space:nowrap;">Import emails to matter</div>
<div class="abs" style="left:3288.500px;top:157.400px"><svg class="mi" width="40" height="40" viewBox="0 0 24 24" style=""><path fill="#4caf87" stroke="#4caf87" stroke-width="0.15" stroke-linejoin="miter" d="M19 13h-6v6h-2v-6H5v-2h6V5h2v6h6v2z"/></svg></div>
<div class="rbtn" style="left:3344px;top:154px"><svg class="mi" width="33" height="33" viewBox="0 0 24 24" style=""><path fill="#fff" stroke="#fff" stroke-width="0.3" stroke-linejoin="miter" d="M17.65 6.35C16.2 4.9 14.21 4 12 4c-4.42 0-7.99 3.58-7.99 8s3.57 8 7.99 8c3.73 0 6.84-2.55 7.73-6h-2.08c-.82 2.33-3.04 4-5.65 4-3.31 0-6-2.69-6-6s2.69-6 6-6c1.66 0 3.14.69 4.22 1.78L13 11h7V4l-2.35 2.35z"/></svg></div>
<div class="hr" style="left:2011px;top:210px;width:1381px"></div>
<div class="card" style="left:2011px;top:228px;width:1381px;height:774px"></div>
<div class="abs" style="left:2045px;top:246.500px;width:581.500px;height:79px;border:2px solid #d6d6d6;border-radius:9px;background:#fff"></div>
<div class="abs" style="left:2064px;top:266.51px;font-size:32px;font-weight:normal;color:#595959;letter-spacing:0.000px;line-height:40px;white-space:nowrap;">Keyword</div>
<div class="abs" style="left:2643.500px;top:246.500px;width:562px;height:79px;border:2px solid #d6d6d6;border-radius:9px;background:#fff"></div>
<div class="abs" style="left:2661.8px;top:266.51px;font-size:32px;font-weight:normal;color:#1a1a1f;letter-spacing:-0.236px;line-height:40px;white-space:nowrap;">Inbox</div>
<div class="abs" style="left:3145.500px;top:262.900px"><svg class="mi" width="46" height="46" viewBox="0 0 24 24" style=""><path fill="#c6c6c6" d="M16.59 8.59L12 13.17 7.41 8.59 6 10l6 6 6-6z"/></svg></div>
<div class="abs" style="left:3222px;top:246px;width:136px;height:80px;border-radius:9px;background:#404284;"></div>
<div class="abs" style="left:3255.1px;top:266.51px;font-size:32px;font-weight:normal;color:#fff;letter-spacing:-0.168px;line-height:40px;white-space:nowrap;">Filter</div>
<div class="abs" style="left:2013px;top:342px;width:1377px;height:2px;background:#e8e8e8"></div>
<div class="abs" style="left:2013px;top:343px;width:1377px;height:565px;overflow:hidden"><div class="abs" style="left:-2013px;top:-343px;width:3440px;height:1930px">
<div class="abs em" style="left:2045px;top:360px;width:1297.500px;height:126px"></div>
<div class="abs" style="left:2085px;top:401px"><svg class="mi" width="48" height="48" viewBox="0 0 24 24" style=""><path fill="#52b68b" d="M22 8.98V18c0 1.1-.9 2-2 2H4c-1.1 0-2-.9-2-2V6c0-1.1.9-2 2-2h10.1c-.06.32-.1.66-.1 1 0 1.48.65 2.79 1.67 3.71L12 11 4 6v2l8 5 5.3-3.32c.54.2 1.1.32 1.7.32 1.13 0 2.16-.39 3-1.02zM16 5c0 1.66 1.34 3 3 3s3-1.34 3-3-1.34-3-3-3-3 1.34-3 3z"/></svg></div>
<div class="abs" style="left:2157px;top:378.5px;width:126px;height:32px;border-radius:16px;background:#e9e9e9"></div>
<div class="abs" style="left:2173.9px;top:380.08px;font-size:24px;font-weight:normal;color:#444;letter-spacing:-0.112px;line-height:30px;white-space:nowrap;">CGR108</div>
<div class="abs" style="left:2292.6px;top:375.31px;font-size:32px;font-weight:normal;color:#1a1a1f;letter-spacing:0.324px;line-height:40px;white-space:nowrap;-webkit-text-stroke:0.450px #1a1a1f;">Accepted: [LPID#CGR108] Recycle S Ltd Conference</div>
<div class="abs" style="left:2158px;top:423.8px;font-size:28px;font-weight:normal;color:#8d8d8d;letter-spacing:0.240px;line-height:35px;white-space:nowrap;">From: Jim Meyer</div>
<div class="abs" style="left:3079px;top:380.08px;font-size:24px;font-weight:normal;color:#8d8d8d;letter-spacing:0.768px;line-height:30px;white-space:nowrap;">15/09/2025 5:07 PM</div>
<div class="abs" style="left:3280.700px;top:426px"><svg class="mi" width="30" height="30" viewBox="0 0 24 24" style=""><path fill="#9a9a9a" d="M12 7c2.76 0 5 2.24 5 5 0 .65-.13 1.26-.36 1.83l2.92 2.92c1.51-1.26 2.7-2.89 3.43-4.75-1.73-4.39-6-7.5-11-7.5-1.4 0-2.74.25-3.98.7l2.16 2.16C10.74 7.13 11.35 7 12 7zM2 4.27l2.28 2.28.46.46C3.08 8.3 1.78 10.02 1 12c1.73 4.39 6 7.5 11 7.5 1.55 0 3.03-.3 4.38-.84l.42.42L19.73 22 21 20.73 3.27 3 2 4.27zM7.53 9.8l1.55 1.55c-.05.21-.08.43-.08.65 0 1.66 1.34 3 3 3 .22 0 .44-.03.65-.08l1.55 1.55c-.67.33-1.41.53-2.2.53-2.76 0-5-2.24-5-5 0-.79.2-1.53.53-2.2zm4.31-.78l3.15 3.15.02-.16c0-1.66-1.34-3-3-3l-.17.01z"/></svg></div>
<div class="abs em" style="left:2045px;top:518px;width:1297.500px;height:126px"></div>
<div class="abs" style="left:2085px;top:559px"><svg class="mi" width="48" height="48" viewBox="0 0 24 24" style=""><path fill="#52b68b" d="M22 8.98V18c0 1.1-.9 2-2 2H4c-1.1 0-2-.9-2-2V6c0-1.1.9-2 2-2h10.1c-.06.32-.1.66-.1 1 0 1.48.65 2.79 1.67 3.71L12 11 4 6v2l8 5 5.3-3.32c.54.2 1.1.32 1.7.32 1.13 0 2.16-.39 3-1.02zM16 5c0 1.66 1.34 3 3 3s3-1.34 3-3-1.34-3-3-3-3 1.34-3 3z"/></svg></div>
<div class="abs" style="left:2157px;top:536.5px;width:126px;height:32px;border-radius:16px;background:#e9e9e9"></div>
<div class="abs" style="left:2173.9px;top:538.08px;font-size:24px;font-weight:normal;color:#444;letter-spacing:-0.112px;line-height:30px;white-space:nowrap;">CGR108</div>
<div class="abs" style="left:2292.6px;top:533.31px;font-size:32px;font-weight:normal;color:#1a1a1f;letter-spacing:0.354px;line-height:40px;white-space:nowrap;-webkit-text-stroke:0.450px #1a1a1f;">Accepted: [LPID#CGR108] Recycle Sh First Hearing</div>
<div class="abs" style="left:2158px;top:581.8px;font-size:28px;font-weight:normal;color:#8d8d8d;letter-spacing:0.240px;line-height:35px;white-space:nowrap;">From: Jim Meyer</div>
<div class="abs" style="left:3079px;top:538.08px;font-size:24px;font-weight:normal;color:#8d8d8d;letter-spacing:0.768px;line-height:30px;white-space:nowrap;">15/09/2025 5:07 PM</div>
<div class="abs" style="left:3280.700px;top:584px"><svg class="mi" width="30" height="30" viewBox="0 0 24 24" style=""><path fill="#9a9a9a" d="M12 7c2.76 0 5 2.24 5 5 0 .65-.13 1.26-.36 1.83l2.92 2.92c1.51-1.26 2.7-2.89 3.43-4.75-1.73-4.39-6-7.5-11-7.5-1.4 0-2.74.25-3.98.7l2.16 2.16C10.74 7.13 11.35 7 12 7zM2 4.27l2.28 2.28.46.46C3.08 8.3 1.78 10.02 1 12c1.73 4.39 6 7.5 11 7.5 1.55 0 3.03-.3 4.38-.84l.42.42L19.73 22 21 20.73 3.27 3 2 4.27zM7.53 9.8l1.55 1.55c-.05.21-.08.43-.08.65 0 1.66 1.34 3 3 3 .22 0 .44-.03.65-.08l1.55 1.55c-.67.33-1.41.53-2.2.53-2.76 0-5-2.24-5-5 0-.79.2-1.53.53-2.2zm4.31-.78l3.15 3.15.02-.16c0-1.66-1.34-3-3-3l-.17.01z"/></svg></div>
<div class="abs em" style="left:2045px;top:676px;width:1297.500px;height:154px"></div>
<div class="abs" style="left:2085px;top:731px"><svg class="mi" width="48" height="48" viewBox="0 0 24 24" style=""><path fill="#52b68b" d="M22 8.98V18c0 1.1-.9 2-2 2H4c-1.1 0-2-.9-2-2V6c0-1.1.9-2 2-2h10.1c-.06.32-.1.66-.1 1 0 1.48.65 2.79 1.67 3.71L12 11 4 6v2l8 5 5.3-3.32c.54.2 1.1.32 1.7.32 1.13 0 2.16-.39 3-1.02zM16 5c0 1.66 1.34 3 3 3s3-1.34 3-3-1.34-3-3-3-3 1.34-3 3z"/></svg></div>
<div class="abs" style="left:2158.6px;top:691.31px;font-size:32px;font-weight:normal;color:#1a1a1f;letter-spacing:0.510px;line-height:40px;white-space:nowrap;-webkit-text-stroke:0.450px #1a1a1f;">The folder "CGR109" has been shared with you</div>
<div class="abs" style="left:2158px;top:739.8px;font-size:28px;font-weight:normal;color:#8d8d8d;letter-spacing:0.103px;line-height:35px;white-space:nowrap;">From: SharePoint Online</div>
<div class="abs" style="left:2158.6px;top:782.8px;font-size:28px;font-weight:normal;color:#1a1a1f;letter-spacing:0.419px;line-height:35px;white-space:nowrap;">You've been invited to edit a folder Here's the folder that was shared with you. CGR109...</div>
<div class="abs" style="left:3079px;top:696.08px;font-size:24px;font-weight:normal;color:#8d8d8d;letter-spacing:0.768px;line-height:30px;white-space:nowrap;">07/09/2025 7:47 PM</div>
<div class="abs" style="left:3280.700px;top:742px"><svg class="mi" width="30" height="30" viewBox="0 0 24 24" style=""><path fill="#9a9a9a" d="M12 7c2.76 0 5 2.24 5 5 0 .65-.13 1.26-.36 1.83l2.92 2.92c1.51-1.26 2.7-2.89 3.43-4.75-1.73-4.39-6-7.5-11-7.5-1.4 0-2.74.25-3.98.7l2.16 2.16C10.74 7.13 11.35 7 12 7zM2 4.27l2.28 2.28.46.46C3.08 8.3 1.78 10.02 1 12c1.73 4.39 6 7.5 11 7.5 1.55 0 3.03-.3 4.38-.84l.42.42L19.73 22 21 20.73 3.27 3 2 4.27zM7.53 9.8l1.55 1.55c-.05.21-.08.43-.08.65 0 1.66 1.34 3 3 3 .22 0 .44-.03.65-.08l1.55 1.55c-.67.33-1.41.53-2.2.53-2.76 0-5-2.24-5-5 0-.79.2-1.53.53-2.2zm4.31-.78l3.15 3.15.02-.16c0-1.66-1.34-3-3-3l-.17.01z"/></svg></div>
<div class="abs em" style="left:2045px;top:862px;width:1297.500px;height:154px"></div>
<div class="abs" style="left:2085px;top:917px"><svg class="mi" width="48" height="48" viewBox="0 0 24 24" style=""><path fill="#52b68b" d="M22 8.98V18c0 1.1-.9 2-2 2H4c-1.1 0-2-.9-2-2V6c0-1.1.9-2 2-2h10.1c-.06.32-.1.66-.1 1 0 1.48.65 2.79 1.67 3.71L12 11 4 6v2l8 5 5.3-3.32c.54.2 1.1.32 1.7.32 1.13 0 2.16-.39 3-1.02zM16 5c0 1.66 1.34 3 3 3s3-1.34 3-3-1.34-3-3-3-3 1.34-3 3z"/></svg></div>
<div class="abs" style="left:2158.6px;top:877.31px;font-size:32px;font-weight:normal;color:#1a1a1f;letter-spacing:0.510px;line-height:40px;white-space:nowrap;-webkit-text-stroke:0.450px #1a1a1f;">The folder "CGR108" has been shared with you</div>
<div class="abs" style="left:2158px;top:925.8px;font-size:28px;font-weight:normal;color:#8d8d8d;letter-spacing:0.103px;line-height:35px;white-space:nowrap;">From: SharePoint Online</div>
<div class="abs" style="left:2158.6px;top:968.8px;font-size:28px;font-weight:normal;color:#1a1a1f;letter-spacing:1.439px;line-height:35px;white-space:nowrap;">You've been invited to edit a folder</div>
<div class="abs" style="left:3079px;top:882.08px;font-size:24px;font-weight:normal;color:#8d8d8d;letter-spacing:0.768px;line-height:30px;white-space:nowrap;">07/09/2025 7:46 PM</div>
<div class="abs" style="left:3280.700px;top:928px"><svg class="mi" width="30" height="30" viewBox="0 0 24 24" style=""><path fill="#9a9a9a" d="M12 7c2.76 0 5 2.24 5 5 0 .65-.13 1.26-.36 1.83l2.92 2.92c1.51-1.26 2.7-2.89 3.43-4.75-1.73-4.39-6-7.5-11-7.5-1.4 0-2.74.25-3.98.7l2.16 2.16C10.74 7.13 11.35 7 12 7zM2 4.27l2.28 2.28.46.46C3.08 8.3 1.78 10.02 1 12c1.73 4.39 6 7.5 11 7.5 1.55 0 3.03-.3 4.38-.84l.42.42L19.73 22 21 20.73 3.27 3 2 4.27zM7.53 9.8l1.55 1.55c-.05.21-.08.43-.08.65 0 1.66 1.34 3 3 3 .22 0 .44-.03.65-.08l1.55 1.55c-.67.33-1.41.53-2.2.53-2.76 0-5-2.24-5-5 0-.79.2-1.53.53-2.2zm4.31-.78l3.15 3.15.02-.16c0-1.66-1.34-3-3-3l-.17.01z"/></svg></div>
<div class="abs" style="left:3374px;top:344px;width:16px;height:564px;background:#e6e6e6;border-radius:8px"></div>
<div class="abs" style="left:3374px;top:344px;width:16px;height:175px;background:#bdbdbd;border-radius:8px"></div>
</div></div>
<div class="abs" style="left:2013px;top:908px;width:1377px;height:2px;background:#e8e8e8"></div>
<div class="abs" style="left:2045px;top:926px;width:215px;height:57px;border-radius:8px;background:#e8e8e8;"></div>
<div class="abs" style="left:2062.4px;top:937.3px;font-size:28px;font-weight:normal;color:#8a8a8a;letter-spacing:0.122px;line-height:35px;white-space:nowrap;">Previous page</div>
<div class="abs" style="left:3194px;top:926.500px;width:164px;height:57px;border-radius:8px;background:#d4d4d4;"></div>
<div class="abs" style="left:3211.7px;top:937.3px;font-size:28px;font-weight:normal;color:#17171c;letter-spacing:0.195px;line-height:35px;white-space:nowrap;">Next page</div>
<div class="abs" style="left:2686px;top:937.3px;font-size:28px;font-weight:normal;color:#8a8a8a;letter-spacing:-0.875px;line-height:35px;white-space:nowrap;">Page 1</div>
<div class="abs" style="left:602px;top:1042px"><svg class="mi" width="24" height="32" viewBox="0 0 24 32"><path fill="#17171c" d="M2.500,0 H14.300 V9.300 H24 V29.500 a2.500,2.500 0 0 1 -2.500,2.500 H2.500 a2.500,2.500 0 0 1 -2.500,-2.500 V2.500 a2.500,2.500 0 0 1 2.500,-2.500z M16,0 L24,7.800 H16z"/><path d="M6,15 H18 M6,19.100 H18 M6,23.200 H18" stroke="#efefef" stroke-width="2.100" fill="none"/></svg></div>
<div class="abs" style="left:647.4px;top:1038.91px;font-size:32px;font-weight:normal;color:#1a1a1f;letter-spacing:0.964px;line-height:40px;white-space:nowrap;-webkit-text-stroke:1.250px #1a1a1f;">Recent Accessed Matters</div>
<div class="num" style="left:1045.55px;top:1013.75px">4</div>
<div class="abs" style="left:1841.6px;top:1040.7px;font-size:28px;font-weight:normal;color:#c9782f;letter-spacing:-0.011px;line-height:35px;white-space:nowrap;">View all</div>
<div class="abs" style="left:1942.600px;top:1042px"><svg class="mi" width="34" height="34" viewBox="0 0 24 24" style=""><path fill="#c9782f" stroke="#c9782f" stroke-width="0.7" stroke-linejoin="miter" d="M9 5v2h6.59L4 18.59 5.41 20 17 8.41V15h2V5z"/></svg></div>
<div class="hr" style="left:598px;top:1090px;width:1381px"></div>
<div class="card" style="left:598px;top:1108px;width:1381px;height:774px"></div>
<div class="abs" style="left:600px;top:1110px;width:1377px;height:770px;overflow:hidden"><div class="abs" style="left:-600px;top:-1110px;width:3440px;height:1930px">
<div class="abs" style="left:600px;top:1110px;width:1377px;height:92px;background:#f8f8f8"></div>
<div class="abs" style="left:600px;top:1202px;width:1377px;height:2px;background:#e7e7e7"></div>
<div class="abs" style="left:633.4px;top:1142.83px;font-size:23px;font-weight:bold;color:#202124;letter-spacing:0.729px;line-height:29px;white-space:nowrap;">MATTER</div>
<div class="abs" style="left:1304.6px;top:1142.83px;font-size:23px;font-weight:bold;color:#202124;letter-spacing:0.465px;line-height:29px;white-space:nowrap;">CASE MANAGER</div>
<div class="abs" style="left:1573.7px;top:1142.83px;font-size:23px;font-weight:bold;color:#202124;letter-spacing:0.314px;line-height:29px;white-space:nowrap;">STAGE</div>
<div class="abs" style="left:633.4px;top:1229.11px;font-size:32px;font-weight:normal;color:#1f2024;letter-spacing:0.131px;line-height:40px;white-space:nowrap;">CGR100 (Planning Application for 4 Willows</div>
<div class="abs" style="left:633.4px;top:1285.11px;font-size:32px;font-weight:normal;color:#1f2024;letter-spacing:-0.489px;line-height:40px;white-space:nowrap;">Lane)</div>
<div class="abs" style="left:1304.6px;top:1229.11px;font-size:32px;font-weight:normal;color:#1f2024;letter-spacing:0.070px;line-height:40px;white-space:nowrap;">Christina</div>
<div class="abs" style="left:1304.6px;top:1285.11px;font-size:32px;font-weight:normal;color:#1f2024;letter-spacing:-0.292px;line-height:40px;white-space:nowrap;">Grzasko</div>
<div class="abs" style="left:1573.7px;top:1257.11px;font-size:32px;font-weight:normal;color:#1f2024;letter-spacing:-0.501px;line-height:40px;white-space:nowrap;">Live</div>
<div class="abs" style="left:1865px;top:1244px;width:64px;height:64px;border-radius:9px;background:#dcdcdc;display:flex;align-items:center;justify-content:center"><svg class="mi" width="32" height="32" viewBox="0 0 24 24" style=""><path fill="#141418" d="M12 4.5C7 4.5 2.73 7.61 1 12c1.73 4.39 6 7.5 11 7.5s9.27-3.11 11-7.5c-1.73-4.39-6-7.5-11-7.5zM12 17c-2.76 0-5-2.24-5-5s2.24-5 5-5 5 2.24 5 5-2.24 5-5 5zm0-8c-1.66 0-3 1.34-3 3s1.34 3 3 3 3-1.34 3-3-1.34-3-3-3z"/></svg></div>
<div class="abs" style="left:600px;top:1348px;width:1361px;height:2px;background:#e7e7e7"></div>
<div class="abs" style="left:633.4px;top:1403.11px;font-size:32px;font-weight:normal;color:#1f2024;letter-spacing:-0.084px;line-height:40px;white-space:nowrap;">CGR108 (Recycle Schmikle Limited)</div>
<div class="abs" style="left:1304.6px;top:1375.11px;font-size:32px;font-weight:normal;color:#1f2024;letter-spacing:0.070px;line-height:40px;white-space:nowrap;">Christina</div>
<div class="abs" style="left:1304.6px;top:1431.11px;font-size:32px;font-weight:normal;color:#1f2024;letter-spacing:-0.292px;line-height:40px;white-space:nowrap;">Grzasko</div>
<div class="abs" style="left:1573.7px;top:1375.11px;font-size:32px;font-weight:normal;color:#1f2024;letter-spacing:0.719px;line-height:40px;white-space:nowrap;">Matter</div>
<div class="abs" style="left:1573.7px;top:1431.11px;font-size:32px;font-weight:normal;color:#1f2024;letter-spacing:0.200px;line-height:40px;white-space:nowrap;">Initialisation</div>
<div class="abs" style="left:1865px;top:1390px;width:64px;height:64px;border-radius:9px;background:#dcdcdc;display:flex;align-items:center;justify-content:center"><svg class="mi" width="32" height="32" viewBox="0 0 24 24" style=""><path fill="#141418" d="M12 4.5C7 4.5 2.73 7.61 1 12c1.73 4.39 6 7.5 11 7.5s9.27-3.11 11-7.5c-1.73-4.39-6-7.5-11-7.5zM12 17c-2.76 0-5-2.24-5-5s2.24-5 5-5 5 2.24 5 5-2.24 5-5 5zm0-8c-1.66 0-3 1.34-3 3s1.34 3 3 3 3-1.34 3-3-1.34-3-3-3z"/></svg></div>
<div class="abs" style="left:600px;top:1494px;width:1361px;height:2px;background:#e7e7e7"></div>
<div class="abs" style="left:633.4px;top:1521.11px;font-size:32px;font-weight:normal;color:#1f2024;letter-spacing:0.131px;line-height:40px;white-space:nowrap;">CGR100 (Planning Application for 4 Willows</div>
<div class="abs" style="left:633.4px;top:1577.11px;font-size:32px;font-weight:normal;color:#1f2024;letter-spacing:-0.489px;line-height:40px;white-space:nowrap;">Lane)</div>
<div class="abs" style="left:1304.6px;top:1521.11px;font-size:32px;font-weight:normal;color:#1f2024;letter-spacing:0.070px;line-height:40px;white-space:nowrap;">Christina</div>
<div class="abs" style="left:1304.6px;top:1577.11px;font-size:32px;font-weight:normal;color:#1f2024;letter-spacing:-0.292px;line-height:40px;white-space:nowrap;">Grzasko</div>
<div class="abs" style="left:1573.7px;top:1549.11px;font-size:32px;font-weight:normal;color:#1f2024;letter-spacing:-0.501px;line-height:40px;white-space:nowrap;">Live</div>
<div class="abs" style="left:1865px;top:1536px;width:64px;height:64px;border-radius:9px;background:#dcdcdc;display:flex;align-items:center;justify-content:center"><svg class="mi" width="32" height="32" viewBox="0 0 24 24" style=""><path fill="#141418" d="M12 4.5C7 4.5 2.73 7.61 1 12c1.73 4.39 6 7.5 11 7.5s9.27-3.11 11-7.5c-1.73-4.39-6-7.5-11-7.5zM12 17c-2.76 0-5-2.24-5-5s2.24-5 5-5 5 2.24 5 5-2.24 5-5 5zm0-8c-1.66 0-3 1.34-3 3s1.34 3 3 3 3-1.34 3-3-1.34-3-3-3z"/></svg></div>
<div class="abs" style="left:600px;top:1640px;width:1361px;height:2px;background:#e7e7e7"></div>
<div class="abs" style="left:633.4px;top:1695.11px;font-size:32px;font-weight:normal;color:#1f2024;letter-spacing:-0.228px;line-height:40px;white-space:nowrap;">CGR104 (Joe Bishop)</div>
<div class="abs" style="left:1304.6px;top:1667.11px;font-size:32px;font-weight:normal;color:#1f2024;letter-spacing:0.070px;line-height:40px;white-space:nowrap;">Christina</div>
<div class="abs" style="left:1304.6px;top:1723.11px;font-size:32px;font-weight:normal;color:#1f2024;letter-spacing:-0.292px;line-height:40px;white-space:nowrap;">Grzasko</div>
<div class="abs" style="left:1573.7px;top:1667.11px;font-size:32px;font-weight:normal;color:#1f2024;letter-spacing:0.719px;line-height:40px;white-space:nowrap;">Matter</div>
<div class="abs" style="left:1573.7px;top:1723.11px;font-size:32px;font-weight:normal;color:#1f2024;letter-spacing:0.200px;line-height:40px;white-space:nowrap;">Initialisation</div>
<div class="abs" style="left:1865px;top:1682px;width:64px;height:64px;border-radius:9px;background:#dcdcdc;display:flex;align-items:center;justify-content:center"><svg class="mi" width="32" height="32" viewBox="0 0 24 24" style=""><path fill="#141418" d="M12 4.5C7 4.5 2.73 7.61 1 12c1.73 4.39 6 7.5 11 7.5s9.27-3.11 11-7.5c-1.73-4.39-6-7.5-11-7.5zM12 17c-2.76 0-5-2.24-5-5s2.24-5 5-5 5 2.24 5 5-2.24 5-5 5zm0-8c-1.66 0-3 1.34-3 3s1.34 3 3 3 3-1.34 3-3-1.34-3-3-3z"/></svg></div>
<div class="abs" style="left:600px;top:1786px;width:1361px;height:2px;background:#e7e7e7"></div>
<div class="abs" style="left:633.4px;top:1841.11px;font-size:32px;font-weight:normal;color:#1f2024;letter-spacing:-0.164px;line-height:40px;white-space:nowrap;">CGR106 (Stephen Smith)</div>
<div class="abs" style="left:1304.6px;top:1813.11px;font-size:32px;font-weight:normal;color:#1f2024;letter-spacing:0.070px;line-height:40px;white-space:nowrap;">Christina</div>
<div class="abs" style="left:1304.6px;top:1869.11px;font-size:32px;font-weight:normal;color:#1f2024;letter-spacing:-0.292px;line-height:40px;white-space:nowrap;">Grzasko</div>
<div class="abs" style="left:1573.7px;top:1813.11px;font-size:32px;font-weight:normal;color:#1f2024;letter-spacing:0.719px;line-height:40px;white-space:nowrap;">Matter</div>
<div class="abs" style="left:1573.7px;top:1869.11px;font-size:32px;font-weight:normal;color:#1f2024;letter-spacing:0.200px;line-height:40px;white-space:nowrap;">Initialisation</div>
<div class="abs" style="left:1865px;top:1828px;width:64px;height:64px;border-radius:9px;background:#dcdcdc;display:flex;align-items:center;justify-content:center"><svg class="mi" width="32" height="32" viewBox="0 0 24 24" style=""><path fill="#141418" d="M12 4.5C7 4.5 2.73 7.61 1 12c1.73 4.39 6 7.5 11 7.5s9.27-3.11 11-7.5c-1.73-4.39-6-7.5-11-7.5zM12 17c-2.76 0-5-2.24-5-5s2.24-5 5-5 5 2.24 5 5-2.24 5-5 5zm0-8c-1.66 0-3 1.34-3 3s1.34 3 3 3 3-1.34 3-3-1.34-3-3-3z"/></svg></div>
<div class="abs" style="left:600px;top:1932px;width:1361px;height:2px;background:#e7e7e7"></div>
<div class="abs" style="left:1961px;top:1110px;width:17px;height:770px;background:#e9e9e9"></div>
<div class="abs" style="left:1961px;top:1110px;width:17px;height:380px;background:#bdbdbd;border-radius:0 8px 8px 8px"></div>
</div></div>
<div class="abs" style="left:2012px;top:1043.700px"><svg class="mi" width="30" height="28.200" viewBox="0 0 30 28.200"><path fill="#17171c" d="M8.200,1.600 L8.200,0.300 L9.300,1.100 L10.400,0.300 L11.500,1.100 L12.600,0.300 L13.700,1.100 L14.800,0.300 L15.900,1.100 L17,0.300 L18.100,1.100 L19.200,0.300 L20.300,1.100 L21.400,0.300 L22.500,1.100 L23.600,0.300 L24.700,1.100 L25.800,0.300 L26.900,1.100 L28,0.300 L29.100,1.100 L30,0.300 V24.200 a4,4 0 0 1 -8,0 V15.800 H8.200z M4.800,18.500 H19.600 V24.500 c0,1.500 .5,2.700 1.300,3.700 H4.800 a4.850,4.850 0 0 1 0,-9.700z"/><path d="M12.400,7.450 H25.700 M16.400,12.250 H25.700" stroke="#efefef" stroke-width="2.200" fill="none"/></svg></div>
<div class="abs" style="left:2060.8px;top:1038.91px;font-size:32px;font-weight:normal;color:#1a1a1f;letter-spacing:0.535px;line-height:40px;white-space:nowrap;-webkit-text-stroke:1.250px #1a1a1f;">Recent Invoices</div>
<div class="num" style="left:2309.35px;top:1013.75px">5</div>
<div class="abs" style="left:3254.3px;top:1040.7px;font-size:28px;font-weight:normal;color:#c9782f;letter-spacing:-0.011px;line-height:35px;white-space:nowrap;">View all</div>
<div class="abs" style="left:3355px;top:1042px"><svg class="mi" width="34" height="34" viewBox="0 0 24 24" style=""><path fill="#c9782f" stroke="#c9782f" stroke-width="0.7" stroke-linejoin="miter" d="M9 5v2h6.59L4 18.59 5.41 20 17 8.41V15h2V5z"/></svg></div>
<div class="hr" style="left:2011px;top:1090px;width:1381px"></div>
<div class="card" style="left:2011px;top:1108px;width:1381px;height:774px"></div>
<div class="abs" style="left:2013px;top:1110px;width:1377px;height:770px;overflow:hidden"><div class="abs" style="left:-2013px;top:-1110px;width:3440px;height:1930px">
<div class="abs" style="left:2013px;top:1110px;width:1377px;height:92px;background:#f8f8f8"></div>
<div class="abs" style="left:2013px;top:1202px;width:1377px;height:2px;background:#e7e7e7"></div>
<div class="abs" style="left:2046px;top:1142.83px;font-size:23px;font-weight:bold;color:#202124;letter-spacing:0.356px;line-height:29px;white-space:nowrap;">REF NUMBER</div>
<div class="abs" style="left:2250.4px;top:1142.83px;font-size:23px;font-weight:bold;color:#202124;letter-spacing:0.729px;line-height:29px;white-space:nowrap;">MATTER</div>
<div class="abs" style="left:3100.7px;top:1142.83px;font-size:23px;font-weight:bold;color:#202124;letter-spacing:0.968px;line-height:29px;white-space:nowrap;">STATUS</div>
<div class="abs" style="left:2046px;top:1239.01px;font-size:32px;font-weight:normal;color:#1f2024;letter-spacing:-1.332px;line-height:40px;white-space:nowrap;">CGR100101</div>
<div class="abs" style="left:2250.4px;top:1239.01px;font-size:32px;font-weight:normal;color:#1f2024;letter-spacing:0.070px;line-height:40px;white-space:nowrap;">CGR100 (Planning Application for 4 Willows Lane)</div>
<div class="abs" style="left:3100px;top:1232.0px;width:242px;height:64px;border-radius:9px;background:#f05252;color:#fff;font-weight:bold;font-size:19px;line-height:24px;padding:8px 16.500px;letter-spacing:1.300px">AWAITING<br>PAYMENT</div>
<div class="abs" style="left:2013px;top:1313px;width:1361px;height:2px;background:#e7e7e7"></div>
<div class="abs" style="left:2046px;top:1367.51px;font-size:32px;font-weight:normal;color:#1f2024;letter-spacing:-0.932px;line-height:40px;white-space:nowrap;">CGR102102</div>
<div class="abs" style="left:2250.4px;top:1339.51px;font-size:32px;font-weight:normal;color:#1f2024;letter-spacing:0.041px;line-height:40px;white-space:nowrap;">CGR102 (Gracie Jones (causing Francis Aviation Ltd's</div>
<div class="abs" style="left:2250.4px;top:1395.51px;font-size:32px;font-weight:normal;color:#1f2024;letter-spacing:0.498px;line-height:40px;white-space:nowrap;">offending on 20/10/2020))</div>
<div class="abs" style="left:3100px;top:1361.5px;width:242px;height:64px;border-radius:9px;background:#f05252;color:#fff;font-weight:bold;font-size:19px;line-height:24px;padding:8px 16.500px;letter-spacing:1.300px">AWAITING<br>PAYMENT</div>
<div class="abs" style="left:2013px;top:1459px;width:1361px;height:2px;background:#e7e7e7"></div>
<div class="abs" style="left:2046px;top:1513.51px;font-size:32px;font-weight:normal;color:#1f2024;letter-spacing:-1.399px;line-height:40px;white-space:nowrap;">CGR102101</div>
<div class="abs" style="left:2250.4px;top:1485.51px;font-size:32px;font-weight:normal;color:#1f2024;letter-spacing:0.041px;line-height:40px;white-space:nowrap;">CGR102 (Gracie Jones (causing Francis Aviation Ltd's</div>
<div class="abs" style="left:2250.4px;top:1541.51px;font-size:32px;font-weight:normal;color:#1f2024;letter-spacing:0.498px;line-height:40px;white-space:nowrap;">offending on 20/10/2020))</div>
<div class="abs" style="left:3100px;top:1507.5px;width:242px;height:64px;border-radius:9px;background:#f05252;color:#fff;font-weight:bold;font-size:19px;line-height:24px;padding:8px 16.500px;letter-spacing:1.300px">AWAITING<br>PAYMENT</div>
<div class="abs" style="left:2013px;top:1605px;width:1361px;height:2px;background:#e7e7e7"></div>
<div class="abs" style="left:2046px;top:1631.51px;font-size:32px;font-weight:normal;color:#1f2024;letter-spacing:-0.966px;line-height:40px;white-space:nowrap;">CGR103102</div>
<div class="abs" style="left:2250.4px;top:1631.51px;font-size:32px;font-weight:normal;color:#1f2024;letter-spacing:-0.288px;line-height:40px;white-space:nowrap;">CGR103 (William Shakespeare)</div>
<div class="abs" style="left:3100px;top:1636.0px;width:240px;height:40px;border-radius:7px;background:#52b788;color:#fff;font-weight:bold;font-size:19px;line-height:40px;text-align:center;letter-spacing:1.300px">PAID</div>
<div class="abs" style="left:2013px;top:1695px;width:1361px;height:2px;background:#e7e7e7"></div>
<div class="abs" style="left:2046px;top:1732.51px;font-size:32px;font-weight:normal;color:#1f2024;letter-spacing:-1.399px;line-height:40px;white-space:nowrap;">CGR103101</div>
<div class="abs" style="left:2250.4px;top:1732.51px;font-size:32px;font-weight:normal;color:#1f2024;letter-spacing:-0.288px;line-height:40px;white-space:nowrap;">CGR103 (William Shakespeare)</div>
<div class="abs" style="left:3100px;top:1725.5px;width:242px;height:64px;border-radius:9px;background:#f05252;color:#fff;font-weight:bold;font-size:19px;line-height:24px;padding:8px 16.500px;letter-spacing:1.300px">AWAITING<br>PAYMENT</div>
<div class="abs" style="left:2013px;top:1807px;width:1361px;height:2px;background:#e7e7e7"></div>
<div class="abs" style="left:2046px;top:1844.51px;font-size:32px;font-weight:normal;color:#1f2024;letter-spacing:-0.766px;line-height:40px;white-space:nowrap;">CGR100100</div>
<div class="abs" style="left:2250.4px;top:1844.51px;font-size:32px;font-weight:normal;color:#1f2024;letter-spacing:0.070px;line-height:40px;white-space:nowrap;">CGR100 (Planning Application for 4 Willows Lane)</div>
<div class="abs" style="left:3100px;top:1837.5px;width:242px;height:64px;border-radius:9px;background:#f05252;color:#fff;font-weight:bold;font-size:19px;line-height:24px;padding:8px 16.500px;letter-spacing:1.300px">AWAITING<br>PAYMENT</div>
<div class="abs" style="left:2013px;top:1919px;width:1361px;height:2px;background:#e7e7e7"></div>
<div class="abs" style="left:3374px;top:1110px;width:17px;height:770px;background:#e3e3e3"></div>
<div class="abs" style="left:3374px;top:1110px;width:17px;height:514px;background:#bdbdbd;border-radius:0 8px 8px 8px"></div>
</div></div>
<div class="abs" style="left:3318.600px;top:1864.600px;width:102.500px;height:48px;border-radius:24px;background:#f05454"></div>
<div class="abs" style="left:3333.500px;top:1874.500px"><svg class="mi" width="31" height="31" viewBox="0 0 24 24" style=""><path fill="#fff" d="M12 2C6.48 2 2 6.48 2 12s4.48 10 10 10 10-4.48 10-10S17.52 2 12 2zm1 15h-2v-2h2v2zm0-4h-2V7h2v6z"/></svg></div>
<div class="abs" style="left:3373.4px;top:1871.79px;font-size:26px;font-weight:bold;color:#fff;letter-spacing:1.339px;line-height:32px;white-space:nowrap;">20</div>
</div></body></html>
